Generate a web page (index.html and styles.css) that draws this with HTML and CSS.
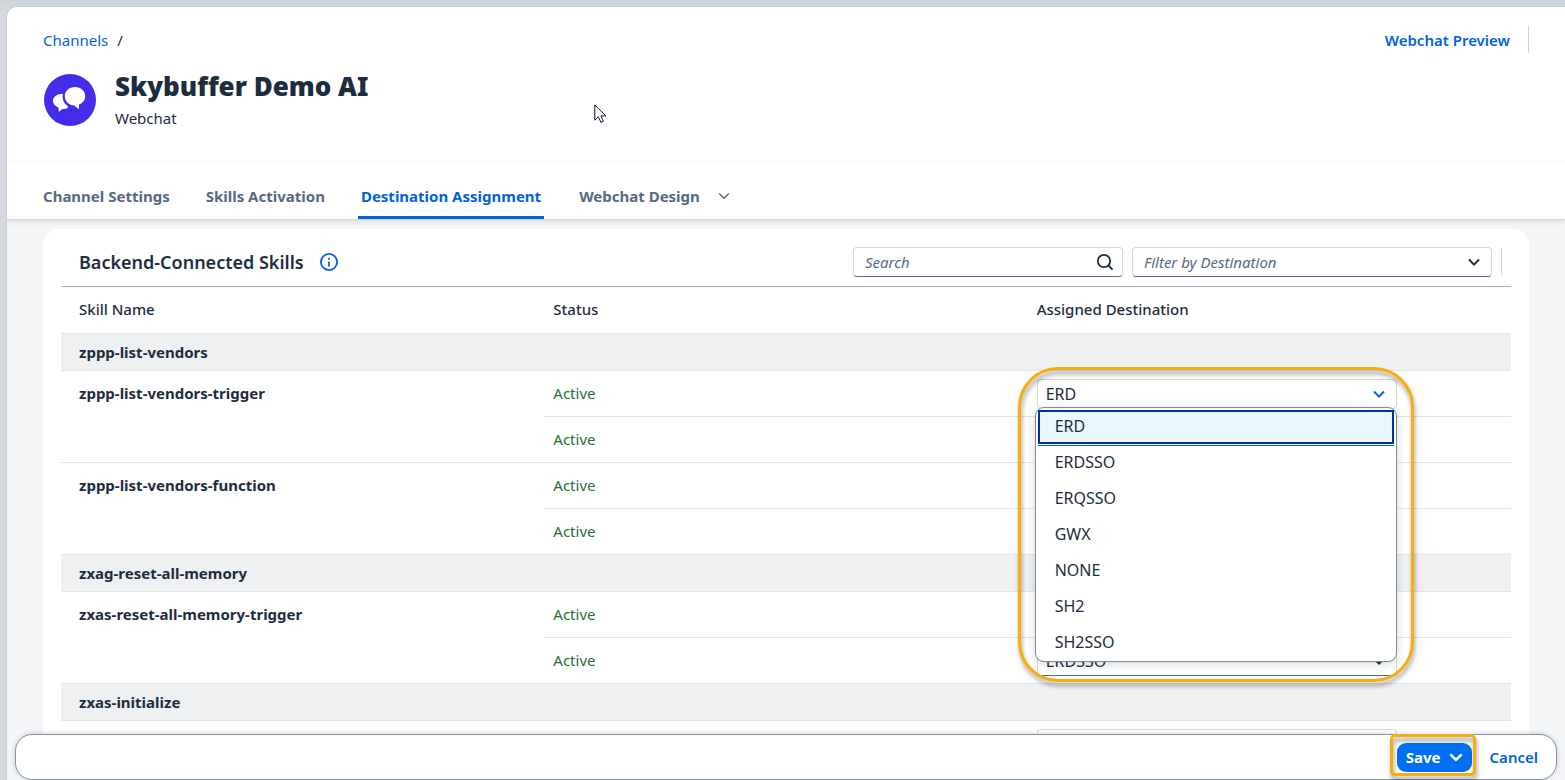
FILE: index.html
```html
<!DOCTYPE html>
<html lang="en">
<head>
<meta charset="utf-8">
<title>Skybuffer Demo AI</title>
<link rel="stylesheet" href="styles.css">
</head>
<body>
<div class="app">
  <header class="page-header">
    <div class="top-row">
      <nav class="breadcrumb" aria-label="Breadcrumb"><a href="#channels">Channels</a><span>/</span></nav>
      <div class="top-actions"><button type="button" class="text-button">Webchat Preview</button><span class="separator"></span></div>
    </div>
    <div class="identity">
      <svg class="avatar" viewBox="0 0 52 52" aria-hidden="true">
        <circle cx="26" cy="26" r="26" fill="#432de8"/>
        <path fill="#fff" d="M31 13c6 0 10.200 4 10.200 9.200 0 3.800-2.400 6.900-6.100 8.400l-.3 4.600-4.400-3.800c-5.400-.1-9.600-4-9.600-9.200C20.800 17 25 13 31 13z"/>
        <path fill="#fff" d="M18.800 19.800c-.8 5.200 1 10 5 12.200l-.1 2.100c-1.600.8-3.700 1-5.300.8L14.800 38l-.4-4.500C11 32 9 29.600 9 26.900c0-4 4.300-7.100 9.800-7.100z"/>
      </svg>
      <div class="identity-text"><h1>Skybuffer Demo AI</h1><p>Webchat</p></div>
    </div>
    <nav class="tabs" aria-label="Sections">
      <a class="tab" href="#settings">Channel Settings</a>
      <a class="tab" href="#skills">Skills Activation</a>
      <a class="tab tab-active" href="#destination" aria-current="page">Destination Assignment</a>
      <a class="tab tab-menu" href="#design">Webchat Design
        <svg class="tab-chevron" viewBox="0 0 12 8" aria-hidden="true"><path d="M1.200 1.500L6 6.300l4.800-4.800"/></svg></a>
    </nav>
  </header>

  <main class="content">
    <section class="card">
      <div class="toolbar">
        <h2>Backend-Connected Skills</h2>
        <button type="button" class="info" aria-label="Information">
          <svg viewBox="0 0 18 18" aria-hidden="true"><circle cx="9" cy="9" r="8.100"/><path d="M9 4.700v2M9 8.600v5"/></svg>
        </button>
        <div class="filters">
          <div class="field search">
            <input type="text" placeholder="Search" aria-label="Search">
            <svg class="search-icon" viewBox="0 0 18 18" aria-hidden="true"><circle cx="8" cy="8" r="6.200"/><path d="M12.500 12.500L16.600 16.600"/></svg>
          </div>
          <div class="field combo">
            <select class="placeholder" aria-label="Filter by Destination"><option>Filter by Destination</option></select>
            <svg class="chevron" viewBox="0 0 14 9" aria-hidden="true"><path d="M2 1.500L7 6.700l5-5.200"/></svg>
          </div>
          <span class="separator"></span>
        </div>
      </div>
      <table>
        <thead><tr><th>Skill Name</th><th>Status</th><th>Assigned Destination</th></tr></thead>
        <tbody>
          <tr class="group"><th colspan="3">zppp-list-vendors</th></tr>
          <tr>
            <th rowspan="2">zppp-list-vendors-trigger</th><td class="status">Active</td>
            <td>
              <div class="field combo combo-open">
                <select aria-label="Destination, first list vendors trigger"><option>ERD</option></select>
                <svg class="chevron" viewBox="0 0 14 9" aria-hidden="true"><path d="M2 1.500L7 6.700l5-5.200"/></svg>
                <ul class="popup" role="listbox" aria-label="Destinations">
                  <li class="selected" role="option" aria-selected="true">ERD</li>
                  <li role="option">ERDSSO</li>
                  <li role="option">ERQSSO</li>
                  <li role="option">GWX</li>
                  <li role="option">NONE</li>
                  <li role="option">SH2</li>
                  <li role="option">SH2SSO</li>
                </ul>
                <span class="callout callout-list"></span>
              </div>
            </td>
          </tr>
          <tr><td class="status">Active</td><td></td></tr>
          <tr><th rowspan="2">zppp-list-vendors-function</th><td class="status">Active</td><td></td></tr>
          <tr><td class="status">Active</td><td></td></tr>
          <tr class="group"><th colspan="3">zxag-reset-all-memory</th></tr>
          <tr><th rowspan="2">zxas-reset-all-memory-trigger</th><td class="status">Active</td><td></td></tr>
          <tr>
            <td class="status">Active</td>
            <td>
              <div class="field combo">
                <select aria-label="Destination, second reset memory trigger"><option>ERDSSO</option></select>
                <svg class="chevron" viewBox="0 0 14 9" aria-hidden="true"><path d="M2 1.500L7 6.700l5-5.200"/></svg>
              </div>
            </td>
          </tr>
          <tr class="group"><th colspan="3">zxas-initialize</th></tr>
          <tr>
            <th></th><td></td>
            <td><div class="field combo"><select aria-label="Destination, initialize"><option></option></select></div></td>
          </tr>
        </tbody>
      </table>
    </section>
  </main>

  <footer class="actions">
    <div class="save-wrap">
      <button type="button" class="save">Save
        <svg viewBox="0 0 14 9" aria-hidden="true"><path d="M2 2l5 4.800L12 2"/></svg></button>
      <span class="callout callout-save"></span>
    </div>
    <button type="button" class="text-button">Cancel</button>
  </footer>
</div>
<svg class="pointer" viewBox="0 0 13 20" aria-hidden="true"><path d="M.8 1v15.200l3.600-3.400 2.500 5.600 2.500-1.200-2.500-5.300h5z"/></svg>
</body>
</html>
```
FILE: styles.css
```css
* { box-sizing: border-box; }

body {
  margin: 0;
  height: 100vh;
  overflow: hidden;
  padding: 7px 0 0 7px;
  background: linear-gradient(#cfd4d9, #d6dadf 12px);
  color: #1d2d3e;
  font: 15px/20px "Noto Sans", "Open Sans", sans-serif;
}

h1, h2, p, ul { margin: 0; padding: 0; }
a { text-decoration: none; color: #0064d9; }
button, input, select { font: inherit; color: inherit; }
button { border: 0; background: none; padding: 0; cursor: pointer; }

.app {
  position: relative;
  height: 100%;
  display: flex;
  flex-direction: column;
  overflow: hidden;
  border-radius: 10px 0 0 0;
  background: #f4f5f7;
  box-shadow: 0 0 2px #aab5bf;
}

.page-header {
  position: relative;
  flex: none;
  background: #fff;
  border-bottom: 1px solid #d5d8dc;
  box-shadow: 0 2px 5px rgba(34, 53, 72, .12);
}

.top-row {
  display: flex;
  justify-content: space-between;
  align-items: center;
  padding: 19px 36px 0;
}
.breadcrumb { display: flex; gap: 9px; }
.top-actions { display: flex; align-items: center; gap: 18px; }
.separator { width: 1px; height: 27px; background: #d0d4d9; }
.text-button { color: #0064d9; font-weight: 600; }

.identity { display: flex; align-items: center; gap: 19px; padding: 17px 37px 31px; }
.avatar { width: 52px; height: 52px; }
h1 { font-size: 26px; line-height: 32px; font-weight: 900; }
.identity-text { height: 60px; }
.identity-text p { margin-top: 6px; }

.tabs {
  display: flex;
  gap: 30px;
  padding: 0 33px;
  border-top: 1px solid #f7f8f9;
}
.tab {
  display: flex;
  align-items: center;
  padding: 24px 3px 10px;
  border-bottom: 3px solid transparent;
  color: #556b82;
  font-weight: 700;
}
.tab-active { color: #0064d9; border-color: #0064d9; border-radius: 2px 2px 0 0; }
.tab-menu { gap: 18px; margin-left: 2px; }
.tab-chevron { width: 12px; height: 8px; fill: none; stroke: #556b82; stroke-width: 1.500; }

.content { flex: 1; min-height: 0; padding: 9px 36px 0; }
.card { background: #fff; border-radius: 16px; padding: 0 18px; }

.toolbar {
  display: flex;
  align-items: center;
  height: 58px;
  padding: 8px 9px 0 18px;
  border-bottom: 1px solid #a8b3bf;
}
h2 { font-size: 18px; line-height: 24px; font-weight: 600; }
.info { margin-left: 16px; width: 18px; height: 18px; }
.info svg { display: block; fill: none; stroke: #0064d9; stroke-width: 1.800; }
.filters { margin-left: auto; display: flex; align-items: center; gap: 9px; }

.field { position: relative; }
.field input, .field select {
  display: block;
  width: 100%;
  height: 30px;
  padding: 0 30px 0 8px;
  border: 1px solid #d3d7dc;
  border-bottom-color: #556b82;
  border-radius: 4px;
  background: #fff;
  appearance: none;
  outline: 0;
}
.search { width: 270px; }
.combo { width: 360px; }
td .field select { font-size: 16px; }
.search input, .field select.placeholder { padding-left: 11px; font-style: italic; color: #556b82; }
.search input::placeholder { color: #556b82; opacity: 1; }
.search-icon {
  position: absolute; right: 9px; top: 6px;
  width: 18px; height: 18px;
  fill: none; stroke: #1d2d3e; stroke-width: 1.800;
}
.chevron {
  position: absolute; right: 11px; top: 11px;
  width: 14px; height: 9px;
  fill: none; stroke: #1d2d3e; stroke-width: 1.900;
}
.combo-open select { border-color: #d3d7dc; }
.combo-open .chevron { stroke: #0064d9; }

table { width: 100%; table-layout: fixed; border-collapse: separate; border-spacing: 0; }
th, td {
  height: 46px;
  padding: 0 9px;
  text-align: left;
  border-bottom: 1px solid #e2e4e7;
}
thead th { height: 47px; padding-bottom: 2px; font-weight: 500; }
th:first-child { padding-left: 18px; }
tbody th { font-weight: 700; vertical-align: top; padding-top: 12px; }
tbody .group th { height: 37px; padding-top: 0; padding-bottom: 1px; vertical-align: middle; background: #eff0f2; }
.status { padding-bottom: 1px; color: #256f3a; }

.popup {
  position: absolute;
  z-index: 2;
  top: 28px;
  left: -2px;
  right: 0;
  padding: 2px 2px 0;
  list-style: none;
  background: #fff;
  border: 1px solid #7e8b98;
  border-radius: 9px;
  box-shadow: 0 2px 8px rgba(34, 53, 72, .2);
  font-size: 16px;
}
.popup li { height: 36px; padding: 7px 17px; }
.popup .selected {
  margin-bottom: 1px;
  padding: 4px 15px;
  height: 34px;
  border: 2px solid #0032a5;
  background: #ebf8ff;
  box-shadow: 0 1px #fff, 0 2px #0064d9;
}

.callout {
  position: absolute;
  border: 3px solid #f8ad0b;
  filter: drop-shadow(1px 4px 2px rgba(0, 0, 0, .4));
  pointer-events: none;
}
.callout-list { z-index: 3; top: -12px; left: -19px; right: -17px; height: 315px; border-radius: 40px; }
.callout-save { top: -9px; right: -4px; bottom: -4px; left: -7px; border-radius: 5px; }

.actions {
  position: absolute;
  z-index: 4;
  left: 8px;
  right: 8px;
  bottom: 0;
  height: 46px;
  display: flex;
  align-items: center;
  justify-content: flex-end;
  gap: 18px;
  padding-right: 18px;
  background: #fff;
  border: 1px solid #8592a0;
  border-radius: 17px;
  box-shadow: 0 0 5px rgba(34, 53, 72, .22);
}
.save-wrap { position: relative; }
.save {
  display: flex;
  align-items: center;
  gap: 8px;
  height: 29px;
  padding: 0 9px;
  border-radius: 9px;
  background: #0070f2;
  color: #fff;
  font-weight: 700;
}
.save svg { width: 14px; height: 9px; fill: none; stroke: #fff; stroke-width: 2.500; stroke-linecap: round; }

.pointer {
  position: absolute;
  left: 594px;
  top: 104px;
  width: 13px;
  height: 20px;
  fill: #fff;
  stroke: #14142b;
  stroke-width: 1;
}
```
